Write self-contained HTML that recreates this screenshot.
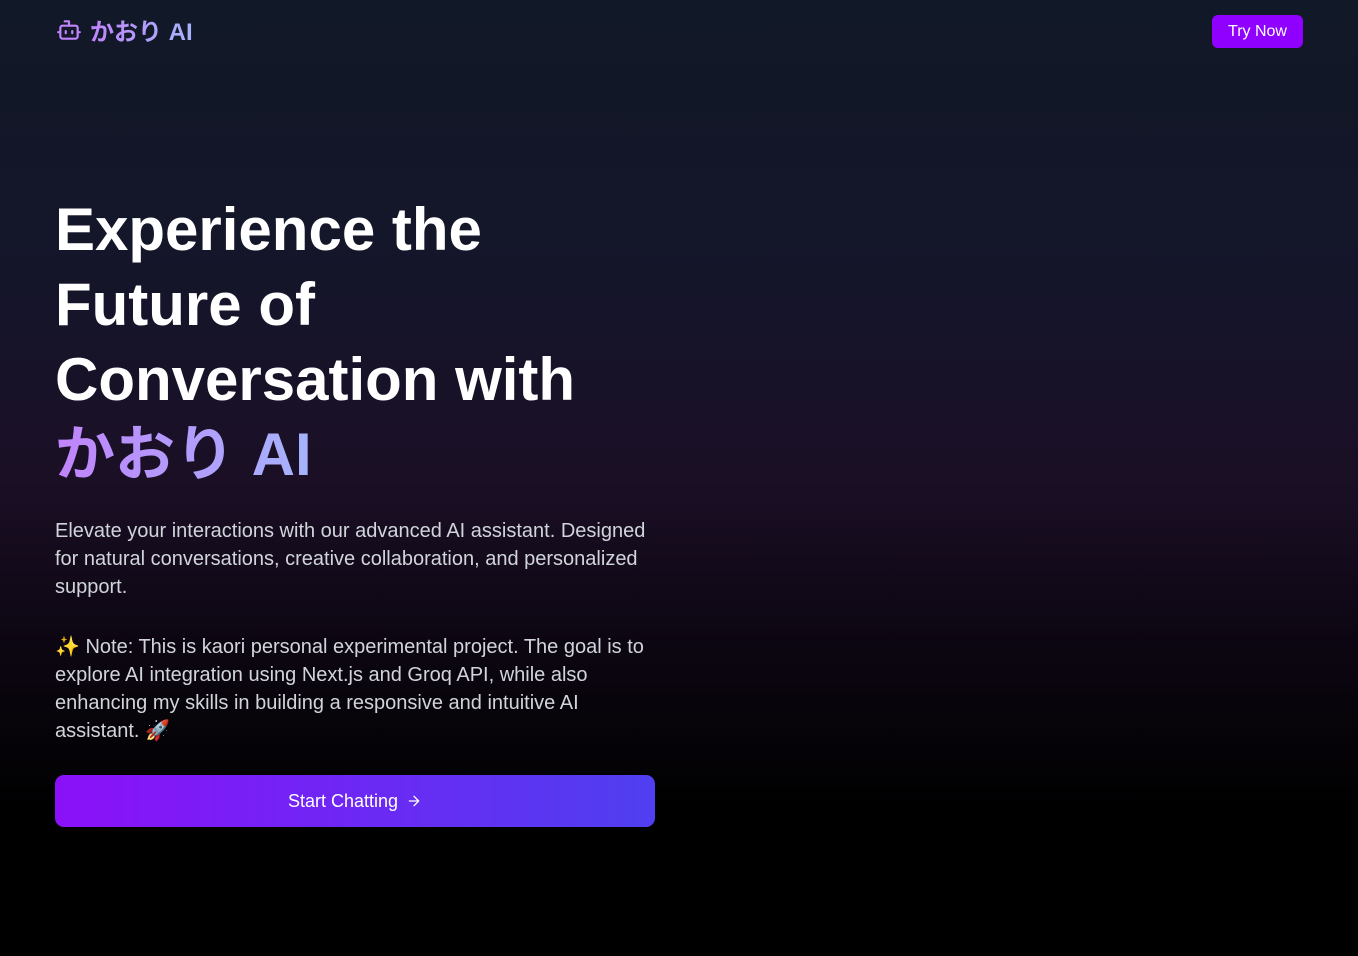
<!DOCTYPE html>
<html><head><meta charset="utf-8"><style>
*{margin:0;padding:0;box-sizing:border-box}
html,body{width:1358px;height:956px;overflow:hidden}
body{font-family:"Liberation Sans","Noto Sans CJK JP",sans-serif;color:#fff;
background:linear-gradient(180deg,#111827 0%,#15152a 30%,#1b0f26 50%,#0e0714 65%,#000 85%,#000 100%);position:relative}
.logo{position:absolute;left:56px;top:12px;display:flex;align-items:center;gap:8px;font-size:24px;font-weight:bold}
.grad{background:linear-gradient(90deg,#c084fc,#a5b4fc);-webkit-background-clip:text;background-clip:text;color:transparent}
.try{position:absolute;left:1212px;top:15px;width:91px;height:33px;background:#9000ff;border-radius:6px;color:#fff;font-size:16px;display:flex;align-items:center;justify-content:center}
h1{position:absolute;left:55px;top:192px;font-size:60px;line-height:75px;font-weight:bold;width:620px}
.p{position:absolute;left:55px;width:600px;font-size:20px;line-height:28px;color:#d1d5db}
.btn{position:absolute;left:55px;top:775px;width:600px;height:52px;border-radius:9px;background:linear-gradient(90deg,#8b10f8,#4f3ff0);display:flex;align-items:center;justify-content:center;font-size:18px;gap:8px}
</style></head><body>
<div class="logo"><svg width="26" height="26" viewBox="0 0 24 24" fill="none" stroke="#c084fc" stroke-width="2" stroke-linecap="round" stroke-linejoin="round"><path d="M12 8V4H8"/><rect x="4" y="8" width="16" height="12" rx="2"/><path d="M2 14h2M20 14h2M15 13v2M9 13v2"/></svg><span class="grad">かおり AI</span></div>
<div class="try">Try Now</div>
<h1>Experience the<br>Future of<br>Conversation with<br><span class="grad">かおり AI</span></h1>
<div class="p" style="top:517px">Elevate your interactions with our advanced AI assistant. Designed for natural conversations, creative collaboration, and personalized support.</div>
<div class="p" style="top:633px">✨ Note: This is kaori personal experimental project. The goal is to explore AI integration using Next.js and Groq API, while also enhancing my skills in building a responsive and intuitive AI assistant. 🚀</div>
<div class="btn">Start Chatting <svg width="16" height="16" viewBox="0 0 24 24" fill="none" stroke="#fff" stroke-width="2" stroke-linecap="round" stroke-linejoin="round"><path d="M5 12h14M12 5l7 7-7 7"/></svg></div>
</body></html>
